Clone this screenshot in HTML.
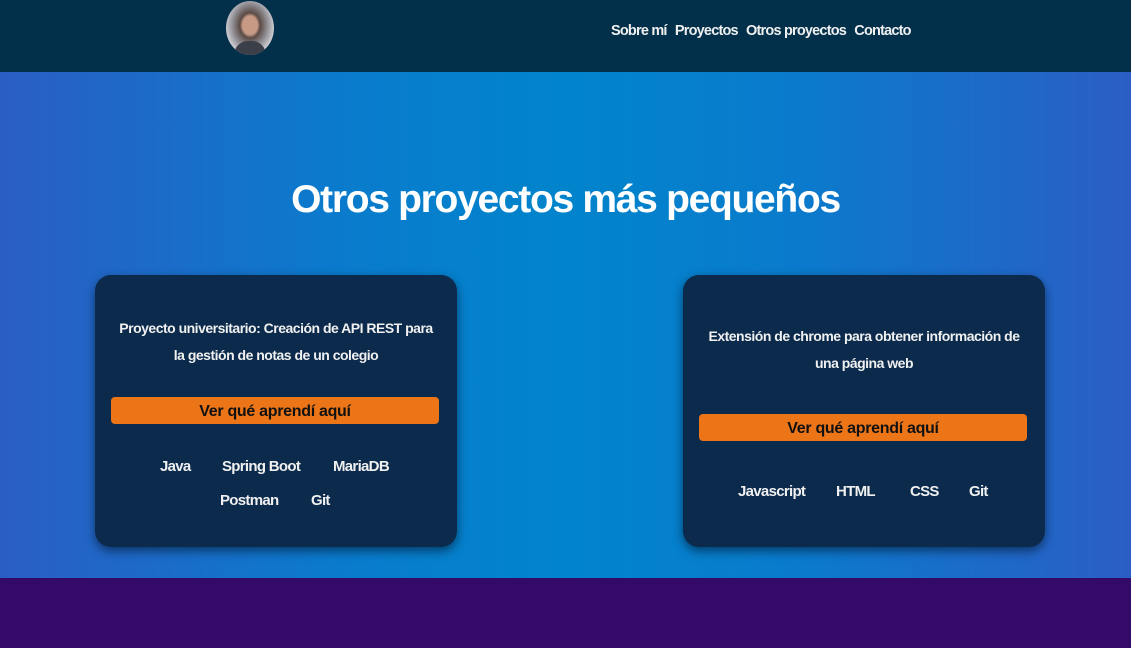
<!DOCTYPE html>
<html><head><meta charset="utf-8"><style>
*{margin:0;padding:0;box-sizing:border-box}
body{width:1131px;height:648px;overflow:hidden;font-family:"Liberation Sans",sans-serif;position:relative;background:#330a68}
.hdr{position:absolute;left:0;top:0;width:1131px;height:72px;background:#02304a}
.av{position:absolute;left:226px;top:1px;width:48px;height:54px;border-radius:50%;background:radial-gradient(ellipse at 50% 45%,#c79a85 0 22%,#5b4a46 30%,#9a9aa0 55%,#d8d8dc 75%);overflow:hidden}
.av:after{content:"";position:absolute;left:8px;bottom:0;width:32px;height:14px;background:#3b3f4a;border-radius:14px 14px 0 0}
.nav{position:absolute;top:23px;left:611px;color:#f0f0f0;font-size:14.5px;font-weight:bold;letter-spacing:-0.8px;white-space:nowrap}
.nav span{margin-right:5px}
.hero{position:absolute;left:0;top:72px;width:1131px;height:506px;background:linear-gradient(90deg,#2b5ec5 0%,#0a7bcc 30%,#0184cc 50%,#0a7bcc 70%,#2b5ec5 100%)}
h1{position:absolute;top:178px;left:0;width:1131px;text-align:center;color:#fff;font-size:39px;font-weight:bold;letter-spacing:-1.3px}
.card{position:absolute;top:275px;width:362px;height:272px;background:#0b2a4c;border-radius:16px;box-shadow:0 4px 10px rgba(0,20,40,.6);color:#f0f0f0;text-align:center}
.d{position:absolute;left:0;width:100%;font-size:14px;font-weight:bold;line-height:27px;letter-spacing:-0.5px;white-space:nowrap}
.btn{position:absolute;left:16px;width:328px;height:27px;background:#ec7518;border-radius:4px;color:#111;font-weight:bold;font-size:16px;line-height:29px;letter-spacing:-0.3px}
.tags{position:absolute;left:0;width:100%;font-size:15px;font-weight:bold;letter-spacing:-0.7px;white-space:nowrap}
</style></head><body>
<div class="hdr"><div class="av"></div>
<div class="nav"><span>Sobre mí</span> <span>Proyectos</span> <span>Otros proyectos</span> <span>Contacto</span></div></div>
<div class="hero"></div>
<h1>Otros proyectos más pequeños</h1>
<div class="card" style="left:95px">
<div class="d" style="top:40px">Proyecto universitario: Creación de API REST para<br>la gestión de notas de un colegio</div>
<div class="btn" style="top:122px">Ver qué aprendí aquí</div>
<div class="tags" style="top:183px"><span style="position:absolute;left:65px">Java</span><span style="position:absolute;left:127px">Spring Boot</span><span style="position:absolute;left:238px">MariaDB</span></div>
<div class="tags" style="top:217px"><span style="position:absolute;left:125px">Postman</span><span style="position:absolute;left:216px">Git</span></div>
</div>
<div class="card" style="left:683px">
<div class="d" style="top:48px">Extensión de chrome para obtener información de<br>una página web</div>
<div class="btn" style="top:139px">Ver qué aprendí aquí</div>
<div class="tags" style="top:208px"><span style="position:absolute;left:55px">Javascript</span><span style="position:absolute;left:153px">HTML</span><span style="position:absolute;left:227px">CSS</span><span style="position:absolute;left:286px">Git</span></div>
</div>
</body></html>
